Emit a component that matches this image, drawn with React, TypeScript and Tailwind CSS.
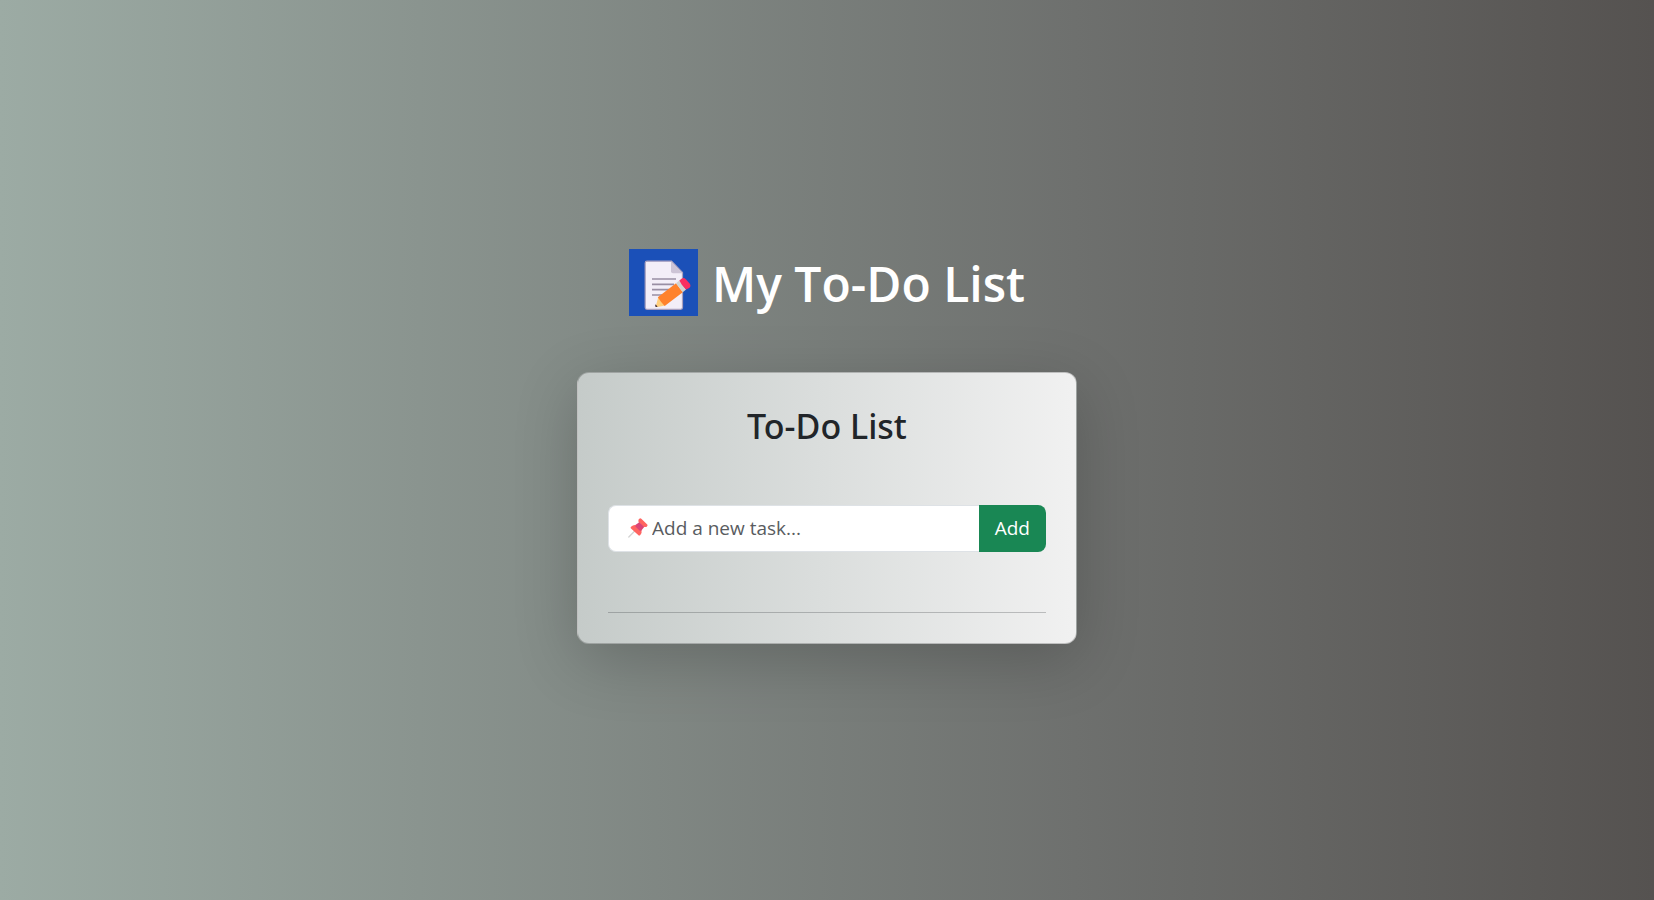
import { useState } from "react";

function MemoIcon() {
  return (
    <svg viewBox="0 0 69 67" className="h-[67px] w-[69px] shrink-0 bg-[#1b50b8]" aria-hidden="true">
      <path d="M18 12.200h24.500L53.500 23.500v35q0 1.800-1.800 1.800H18q-1.800 0-1.800-1.800V14q0-1.800 1.800-1.800z" fill="#f3eef8" stroke="#a9a0be" strokeWidth="1.200" />
      <path d="M42 12.200l11.500 12H44q-2 0-2-2z" fill="#cdc4d6" />
      <path d="M23 30h24M23 35.300h22M23 40.600h17M23 46h11" stroke="#998ea4" strokeWidth="1.700" />
      <path d="M26.800 57.200l2.500-9.300 7 8.500-8 1.500q-1.500.3-1.500-.7z" fill="#ffce7c" />
      <path d="M28.800 48.300L47 34.200l6.800 9L35.700 57q-3.500-3.300-6.900-8.700z" fill="#ff822d" />
      <path d="M47 34.200l3.300-2.600 6.800 9-3.300 2.600z" fill="#d3d3d3" />
      <path d="M50.300 31.600l2.600-2q2-1.400 3.900.6l3.800 4.200q1.900 2.500-.4 4.500l-3.100 1.700q-4.500-4-6.800-9z" fill="#f92f60" />
      <path d="M26.600 55.300l2 2.400-1.200.3q-1.300 0-1.200-1.300z" fill="#402a32" />
    </svg>
  );
}

function PinIcon() {
  return (
    <svg viewBox="0 0 20 20" className="pointer-events-none absolute left-5 h-5 w-5" aria-hidden="true">
      <path d="M.8 19L8 11.800" stroke="#d3d3d3" strokeWidth="1.300" strokeLinecap="round" />
      <path d="M11.300.8q1-.9 2 0l5.700 5.400q1 1 .1 2-1 1-2 .2l-6-5.600q-.9-1 .2-2z" fill="#ff6561" />
      <path d="M10.800 1.500l8 7q-2 1-3.700.2L10.700 4.300q-.7-1.300.1-2.800z" fill="#ff6561" />
      <path d="M11.200 4.200l5 4.700-3.500 4.400-6-5.700z" fill="#d94478" />
      <path d="M3 8.800q2.500-2.500 5.500-1.600l5 4.900q.7 2.700-1.200 5-1 1-2.100 0L3 10.600q-.9-.9 0-1.800z" fill="#ff6561" />
      <path d="M8.300 7l5.400 5-1.600 1-4.900-4.700z" fill="#d94478" />
    </svg>
  );
}

export default function App() {
  const [task, setTask] = useState("");
  const [tasks, setTasks] = useState<string[]>([]);

  const addTask = () => {
    const text = task.trim();
    if (!text) return;
    setTasks([...tasks, text]);
    setTask("");
  };

  return (
    <main className="flex min-h-screen flex-col items-center justify-center bg-linear-to-r/srgb from-[#9caba4] via-[#6e706e] via-65% to-[#555250] px-4 pb-2 font-['Open_Sans','Noto_Sans',sans-serif]">
      <h1 className="mb-14 flex items-center gap-3.5 text-5xl leading-none font-semibold text-white">
        <MemoIcon />
        <span className="pt-1">My To-Do List</span>
      </h1>
      <section className="w-full max-w-[500px] rounded-xl border border-black/20 bg-linear-to-r/srgb from-[#c5cbc9] to-[#f1f1f1] p-[30px] shadow-[0_16px_64px_rgba(0,0,0,0.2)]">
        <h2 className="mb-14 text-center font-['Noto_Sans','Open_Sans',sans-serif] text-[34px] leading-[46px] font-medium text-[#212529]">
          To-Do List
        </h2>
        <form
          className="flex"
          onSubmit={(event) => {
            event.preventDefault();
            addTask();
          }}
        >
          <div className="relative flex min-w-0 flex-1 items-center">
            <PinIcon />
            <input
              type="text"
              aria-label="New task"
              placeholder="Add a new task..."
              value={task}
              onChange={(event) => setTask(event.target.value)}
              className="h-[47px] w-full rounded-l-lg border border-r-0 border-[#dee2e6] bg-white pr-4 pl-[43px] text-[19px] text-[#212529] outline-none placeholder:text-[#595c5f]"
            />
          </div>
          <button type="submit" className="h-[47px] rounded-r-lg bg-[#198754] px-4 text-[19px] text-white">
            Add
          </button>
        </form>
        <ul>
          {tasks.map((item, index) => (
            <li key={index} className="pt-4 text-[19px] text-[#212529]">
              {item}
            </li>
          ))}
        </ul>
        <hr className="mt-[60px] border-t border-[#212529]/25" />
      </section>
    </main>
  );
}
